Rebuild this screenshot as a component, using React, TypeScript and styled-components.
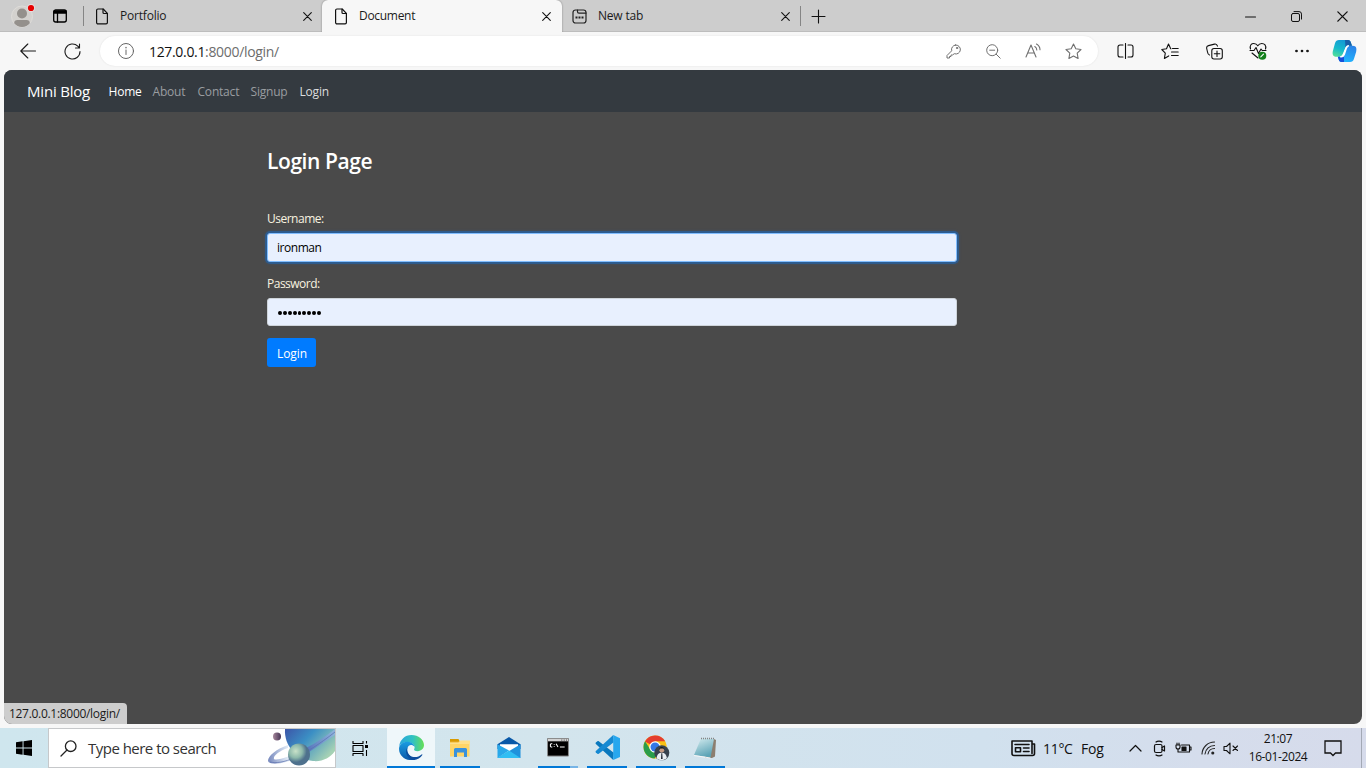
import React from "react";
import styled, { createGlobalStyle } from "styled-components";

const Global = createGlobalStyle`
  * { box-sizing: border-box; }
  html, body { margin: 0; padding: 0; overflow: hidden; }
  body {
    font-family: "Segoe UI", "Open Sans", "Noto Sans", sans-serif;
    font-size: 12px;
    color: #1b1b1b;
  }
  svg { display: block; flex: none; }
`;

const Screen = styled.div`
  width: 1366px;
  height: 768px;
  display: flex;
  flex-direction: column;
  background: #f7f7f7;
`;

const Text = styled.span<{ $ls?: number; $size?: number }>`
  white-space: nowrap;
  letter-spacing: ${(p) => p.$ls ?? 0}px;
  ${(p) => p.$size && `font-size: ${p.$size}px;`}
`;

/* ---------- tab strip ---------- */
const TabStrip = styled.div`
  height: 32px;
  flex: none;
  display: flex;
  align-items: stretch;
  background: #cdcdcd;
  box-shadow: inset 0 -1px 0 #bdbdbd;
`;
const StripStart = styled.div`
  width: 83px;
  display: flex;
  align-items: center;
  padding-left: 11px;
  gap: 17px;
`;
const Divider = styled.div`
  width: 1px;
  height: 20px;
  align-self: center;
  background: #858585;
`;
const Tab = styled.div<{ $w: number; $active?: boolean; $pad: number }>`
  width: ${(p) => p.$w}px;
  padding: 0 ${(p) => (p.$active ? 11 : 10)}px 0 ${(p) => p.$pad}px;
  display: flex;
  align-items: center;
  border-radius: ${(p) => (p.$active ? "6px 6px 0 0" : "0")};
  background: ${(p) => (p.$active ? "#f7f7f7" : "transparent")};
  box-shadow: ${(p) => (p.$active ? "0 0 2px rgba(0,0,0,.4)" : "none")};
  clip-path: inset(0 -3px 0 -3px);
`;
const TabTitle = styled(Text)`
  flex: 1;
  padding-left: 11px;
  line-height: 16px;
`;
const NewTabButton = styled.div`
  width: 35px;
  display: grid;
  place-items: center;
`;
const WindowButtons = styled.div`
  margin-left: auto;
  margin-right: 1px;
  display: flex;
`;
const WindowButton = styled.div`
  width: 46px;
  display: grid;
  place-items: center;
`;

/* ---------- toolbar ---------- */
const Toolbar = styled.div`
  height: 38px;
  flex: none;
  display: flex;
  align-items: center;
  background: #f7f7f7;
`;
const ToolCell = styled.div<{ $w: number; $pl?: number }>`
  width: ${(p) => p.$w}px;
  height: 38px;
  padding-left: ${(p) => p.$pl ?? 0}px;
  flex: none;
  display: grid;
  place-items: center;
`;
const AddressBar = styled.div`
  width: 998px;
  height: 30px;
  margin-left: 6px;
  padding: 0 5px 0 17px;
  display: flex;
  align-items: center;
  border-radius: 15px;
  background: #fff;
  box-shadow: 0 0 2px rgba(0, 0, 0, 0.1);
`;
const Url = styled(Text)`
  flex: 1;
  padding-left: 14px;
  font-size: 14px;
  color: #6d6d6d;
  b { font-weight: 400; color: #111; }
`;

/* ---------- web page ---------- */
const Viewport = styled.main`
  position: relative;
  width: 1358px;
  height: 654px;
  flex: none;
  margin: 0 4px 4px;
  border-radius: 8px;
  overflow: hidden;
  background: #4a4a4a;
  color: #fff;
`;
const Navbar = styled.nav`
  height: 42px;
  padding: 0 23px;
  display: flex;
  align-items: center;
  background: #343a40;
`;
const Brand = styled(Text)`
  width: 81.5px;
  font-size: 15px;
`;
const NavLink = styled(Text)<{ $w: number; $tone?: "muted" | "hover" }>`
  width: ${(p) => p.$w}px;
  font-size: 12px;
  color: ${(p) => (p.$tone === "muted" ? "#9a9da0" : p.$tone === "hover" ? "#dcddde" : "#fff")};
`;
const LoginForm = styled.div`
  width: 690px;
  margin-left: 263px;
  padding-top: 35px;
  display: flex;
  flex-direction: column;
  align-items: flex-start;
`;
const Heading = styled.h3`
  margin: 0 0 34px;
  font-size: 21px;
  line-height: 29px;
  font-weight: 600;
  letter-spacing: -0.42px;
`;
const FieldLabel = styled.label`
  height: 18px;
  line-height: 18px;
  margin-bottom: 5px;
  letter-spacing: -0.5px;
  color: #f8f3e0;
`;
const Field = styled.div<{ $focus?: boolean }>`
  width: 690px;
  height: ${(p) => (p.$focus ? 29 : 28)}px;
  margin-bottom: ${(p) => (p.$focus ? 13 : 12)}px;
  padding: 0 9px;
  display: flex;
  align-items: center;
  border: 1px solid ${(p) => (p.$focus ? "#80bdff" : "#ced4da")};
  border-radius: 3px;
  background: #e8f0fe;
  color: #000;
  box-shadow: ${(p) => (p.$focus ? "0 0 0 2px rgba(0,123,255,.3), 0 0 3px 2px rgba(0,123,255,.15)" : "none")};
`;
const Dots = styled.span`
  display: flex;
  gap: 1px;
  padding: 2px 0 0 1px;
`;
const Dot = styled.i`
  width: 3.9px;
  height: 4px;
  border-radius: 50%;
  background: #000;
`;
const Submit = styled.button`
  width: 49px;
  height: 29px;
  padding: 2px 0 0 1px;
  border: 0;
  border-radius: 3px;
  background: #007bff;
  color: #fff;
  font: 12px "Segoe UI", "Open Sans", sans-serif;
  letter-spacing: -0.1px;
`;
const StatusBubble = styled.div`
  position: absolute;
  left: 0;
  bottom: 0;
  width: 123px;
  height: 21px;
  padding-left: 5px;
  line-height: 21px;
  border-radius: 0 4px 0 0;
  background: #cdcdcd;
  color: #1b1b1b;
`;

/* ---------- taskbar ---------- */
const Taskbar = styled.footer`
  height: 40px;
  flex: none;
  display: flex;
  background: linear-gradient(90deg, #cfe6ee 0%, #d3e5ed 40%, #d1e1ee 72%, #d5ddec 88%, #d6dbeb 100%);
`;
const Start = styled.div`
  width: 48px;
  display: grid;
  place-items: center;
`;
const Search = styled.div`
  width: 288px;
  display: flex;
  align-items: center;
  padding-left: 11px;
  border: 1px solid #c6c8ca;
  background: #fff;
`;
const SearchHint = styled(Text)`
  width: 190px;
  flex: none;
  padding-left: 11px;
  font-size: 15px;
  color: #333;
`;
const Apps = styled.div`
  display: flex;
  gap: 1px;
  margin-left: 3px;
`;
const AppButton = styled.div<{ $active?: boolean; $open?: boolean; $stack?: boolean }>`
  width: 48px;
  height: 40px;
  display: grid;
  place-items: center;
  padding-bottom: 1px;
  background: ${(p) =>
    p.$active
      ? "linear-gradient(#0078d7,#0078d7) 0 100% / 48px 2px no-repeat, #eff7fa"
      : p.$stack
      ? "linear-gradient(90deg,#0078d7 32px,#76b4e6 32px) 4px 100% / 40px 2px no-repeat"
      : p.$open
      ? "linear-gradient(#0078d7,#0078d7) 4px 100% / 40px 2px no-repeat"
      : "transparent"};
`;
const Tray = styled.div`
  margin-left: auto;
  display: flex;
  align-items: center;
  color: #111;
`;
const Weather = styled(Text)<{ $w: number }>`
  width: ${(p) => p.$w}px;
  font-size: 14px;
`;
const Temperature = styled(Weather)`
  margin-left: 7px;
`;
const TrayCell = styled.div<{ $w: number }>`
  width: ${(p) => p.$w}px;
  display: grid;
  place-items: center;
`;
const Clock = styled.div`
  width: 80px;
  margin-left: -3px;
  display: flex;
  flex-direction: column;
  align-items: center;
  line-height: 18px;
`;
const ShowDesktop = styled.div`
  width: 5px;
  height: 40px;
  margin-left: 13px;
  border-left: 1px solid #a3a9b5;
`;

/* ---------- icons ---------- */
type IconProps = { w?: number; h?: number; vb?: string; c?: string; sw?: number; children: React.ReactNode };
const Icon = ({ w = 16, h = 16, vb, c = "#1b1b1b", sw = 1.1, children }: IconProps) => (
  <svg width={w} height={h} viewBox={vb ?? `0 0 ${w} ${h}`} fill="none" stroke={c} strokeWidth={sw} strokeLinecap="round" strokeLinejoin="round">
    {children}
  </svg>
);

const Profile = () => (
  <svg width="24" height="24" viewBox="0 0 24 24">
    <circle cx="11" cy="12.5" r="10.5" fill="#d3d1ce" stroke="#dedcd9" />
    <circle cx="11" cy="9.5" r="5" fill="#94908c" />
    <path d="M3.2 19.2c0-2 1.2-3.2 3.2-3.2h9.2c2 0 3.2 1.2 3.2 3.2-1.8 2.4-4.6 3.8-7.8 3.8s-6-1.4-7.8-3.8z" fill="#94908c" />
    <circle cx="20" cy="4" r="3.9" fill="#e6dede" />
    <circle cx="20" cy="4" r="3.1" fill="#e60000" />
  </svg>
);
const Workspaces = () => (
  <Icon sw={1.3} c="#000"><rect x="1.7" y="2" width="12.600" height="12" rx="2" /><path d="M2 3h12v2H2z" fill="#000" /><path d="M5.500 5v9" /></Icon>
);
const PageIcon = () => (
  <Icon w={14} h={17} sw={1.2} c="#111"><path d="M3 1h5.2L12.4 5.3V14.5a1.3 1.3 0 0 1-1.3 1.3H3A1.3 1.3 0 0 1 1.6 14.500V2.300A1.300 1.300 0 0 1 3 1z" /><path d="M8 1.200V4.500a1 1 0 0 0 1 1h3.300" /></Icon>
);
const NewTabIcon = () => (
  <Icon w={15} h={15} sw={1.2} c="#222"><rect x="1" y="1" width="13" height="13" rx="2.500" /><path d="M5.500 1.200v1.500a1.400 1.400 0 0 0 1.400 1.400H14" /><path d="M3.500 8.500h2M6.500 8.500h2M9.500 8.500h2" strokeWidth="2" strokeLinecap="butt" /></Icon>
);
const Close = ({ s = 9 }: { s?: number }) => (
  <Icon w={s} h={s} vb="0 0 9 9" c="#111"><path d="M.7.7l7.600 7.600M8.300.7L.7 8.300" /></Icon>
);

const Planets = () => (
  <svg width="68" height="38" viewBox="0 0 68 38">
    <defs>
      <linearGradient id="big" x1="0" y1="0" x2="1" y2=".6">
        <stop offset="0" stopColor="#3c55a8" /><stop offset=".45" stopColor="#3b8fc4" /><stop offset="1" stopColor="#a5d1b4" />
      </linearGradient>
      <radialGradient id="small" cx=".35" cy=".35"><stop offset="0" stopColor="#c9e2c9" /><stop offset=".6" stopColor="#8db9ab" /><stop offset="1" stopColor="#4e718d" /></radialGradient>
      <linearGradient id="tiny"><stop offset="0" stopColor="#a6879b" /><stop offset="1" stopColor="#453454" /></linearGradient>
      <linearGradient id="ring"><stop offset="0" stopColor="#7688bd" /><stop offset=".3" stopColor="#e3edf7" /><stop offset=".55" stopColor="#526fba" /><stop offset="1" stopColor="#8fb6dc" /></linearGradient>
    </defs>
    <path d="M18 0h50v22c-5 7-13 11-22 10C29 30 17 17 18 0z" fill="url(#big)" />
    <path d="M21 16C9 20 1 27 1 32c2 6 25 2 44-11L68 6V0C59 7 49 14 39 19 24 28 9 32 7 30c-1-3 5-8 14-11z" fill="url(#ring)" />
    <path d="M3 33C15 36 36 28 68 3" fill="none" stroke="#5b70ae" strokeWidth=".7" />
    <circle cx="32" cy="25.500" r="11" fill="url(#small)" />
    <circle cx="10" cy="7.500" r="4" fill="url(#tiny)" />
  </svg>
);

const EdgeLogo = () => (
  <svg width="25" height="25" viewBox="0 0 24 24">
    <defs>
      <linearGradient id="e1" x1="0" y1=".3" x2="1" y2=".3"><stop offset="0" stopColor="#2aa5dc" /><stop offset=".55" stopColor="#30c2c2" /><stop offset="1" stopColor="#67df54" /></linearGradient>
      <linearGradient id="e2" x1="0" y1="0" x2="0" y2="1"><stop offset="0" stopColor="#1b9de2" /><stop offset="1" stopColor="#0b58a8" /></linearGradient>
    </defs>
    <path d="M.2 11C.8 4.600 5.700 0 12 0c6.700 0 12 4.600 12 9.700 0 3.400-2.700 5.800-6 5.800-2.800 0-4.100-1-3.400-2.100C16.200 11 13.400 7.200 9 6.900 4.500 6.600 1.300 8.500.2 11z" fill="url(#e1)" />
    <path d="M.1 12.200C.6 8.800 4.200 6.200 8.600 6.400c3.400.2 6.200 2.400 6.400 5-1-1.400-2.500-2-3.700-1.900-3 .3-4.200 4-3 7.200 1 3 4 5.500 7.400 6.700C8.400 26-.8 21 .1 12.200z" fill="url(#e2)" />
    <path d="M9.800 10.200c-2.900 1.700-2.600 7 .7 9.500 3.200 2.400 8.300 1.700 11.200-1 .5-.4 1 .1.700.6-2 3.200-6 5.200-9.500 4.600C7.500 22.800 4 14.200 9.800 10.200z" fill="#0c4d9c" />
  </svg>
);
const FolderIcon = () => (
  <svg width="22" height="20" viewBox="0 0 22 20">
    <path d="M1 3h19.500v15.500H1z" fill="#ffd567" />
    <path d="M1 3V1h8.500l1 2z" fill="#d99a00" />
    <path d="M1 4.500h8.500l2-2h9.500V6H1z" fill="#ffe08a" />
    <path d="M1 3h9.500L9.500 4.300H1z" fill="#e0a418" />
    <path d="M5 19v-7.500A1.500 1.500 0 0 1 6.500 10h10a1.500 1.500 0 0 1 1.500 1.500V19h-3v-4.500H8V19z" fill="#3992dc" />
  </svg>
);
const MailIcon = () => (
  <svg width="24" height="23" viewBox="0 0 25 23">
    <path d="M.5 8L12.500.5 24.500 8v5H.5z" fill="#0858a8" /><path d="M3 8h19v7l-9.500 3L3 15z" fill="#fff" />
    <path d="M.5 8l12 6.500L.5 22.500z" fill="#28a8ea" /><path d="M24.500 8v14.500H.5z" fill="#1f92dc" /><path d="M.5 22.500h24L12.500 14.500z" fill="#30bef3" />
  </svg>
);
const TerminalIcon = () => (
  <svg width="22" height="19" viewBox="0 0 23 20">
    <path d="M.5.5h22v18.500H.5z" fill="#000" stroke="#8b8b8b" /><path d="M1 1h21v2.500H1z" fill="#d2d2d2" />
    <path d="M15 2.200h1M17.500 2.200h1M20 2.200h1" stroke="#333" />
    <path d="M5.500 6H4.200L3.500 6.800v2l.7.700h1.300M7.500 6.500v.8M7.500 8.500v.8M9.500 6l2 3.500M13.500 9.500h5" stroke="#fff" fill="none" strokeWidth="1.100" />
  </svg>
);
const CodeIcon = () => (
  <svg width="25" height="25" viewBox="0 0 24 24">
    <path d="M17.500 24L.8 8.700c-.4-.4-.4-1 0-1.400L2.300 6c.4-.3.9-.3 1.300 0L18 17z" fill="#0a78bd" />
    <path d="M17.500 0L.8 15.300c-.4.4-.4 1 0 1.400L2.300 18c.4.300.9.300 1.300 0L18 7z" fill="#1689d2" />
    <path d="M17.500 0v24L24 21V3z" fill="#27a7ee" />
  </svg>
);
const ChromeIcon = () => (
  <svg width="27" height="26" viewBox="0 0 28 27">
    <circle cx="12.500" cy="12.500" r="12" fill="#fbc116" />
    <path d="M12.500 12.500L2 6.700A12 12 0 0 1 23 6.500H12.500z" fill="#e43e2f" />
    <path d="M2.100 6.500A12 12 0 0 0 12 24.500l5.200-9.300-4.700-2.700-4.800 2.700z" fill="#2a9d4b" />
    <circle cx="12.500" cy="12.500" r="6" fill="#fff" /><circle cx="12.500" cy="12.500" r="4.700" fill="#3577e8" />
    <circle cx="19.500" cy="18.500" r="7.800" fill="#38424f" />
    <path d="M14 24.200c.7-4 2.300-5.700 5.500-5.700 3 0 4.800 1.700 5.300 5.500-2.800 2.800-7.500 3-10.800.2z" fill="#e9edf3" />
    <circle cx="19.500" cy="15.800" r="2.500" fill="#c79a83" /><path d="M16.800 15.500c-.1-4 5.200-4 5.400-.2l-1-1.300h-3.300z" fill="#15171c" />
    <path d="M19 19h1l.4 6h-1.700z" fill="#1c2330" />
  </svg>
);
const NotepadIcon = () => (
  <svg width="24" height="24" viewBox="0 0 24 24">
    <defs><linearGradient id="np" x1="0" y1="0" x2=".4" y2="1"><stop offset="0" stopColor="#d6edf0" /><stop offset="1" stopColor="#5da4b6" /></linearGradient></defs>
    <path d="M20 2.500l3 1.500-1 16.500-3 1.500H12z" fill="#8c7f70" />
    <path d="M8 2.500L21 3l-3.500 18.500L1 19z" fill="url(#np)" /><path d="M1 19l16.500 2.500-.2 1L.8 20z" fill="#f5f5f5" />
    <path d="M8 2.500h13" stroke="#858585" strokeWidth="1.500" strokeDasharray="1 1" />
  </svg>
);
const Copilot = () => (
  <svg width="25" height="24" viewBox="0 0 25 24">
    <defs>
      <linearGradient id="c1" x1=".6" y1="0" x2=".2" y2="1"><stop offset="0" stopColor="#1297d5" /><stop offset=".55" stopColor="#16b9cb" /><stop offset="1" stopColor="#54df97" /></linearGradient>
      <linearGradient id="c2" x1=".7" y1="0" x2=".3" y2="1"><stop offset="0" stopColor="#2a83e8" /><stop offset="1" stopColor="#20b8ff" /></linearGradient>
    </defs>
    <path d="M7 1h9c2 0 2.600 1.500 3.200 3.500l.8 2.200h-3.500c-2 0-2.700 1-3.300 3L11.400 15c-.7 2-1.600 2.800-3.400 2.800H4.500C.8 17.800 0 15 1 11.500L3 4.300C3.700 2 5 1 7 1z" fill="url(#c1)" />
    <path d="M18 23H9.500c-2 0-2.600-1.500-3.200-3.700l-.5-1.500H9c2 0 2.700-1 3.300-3l1.600-5.200c.7-2 1.500-2.900 3.300-2.900h3.600c3.500 0 4.200 2.800 3.300 6.200L22 19.700c-.7 2.300-2 3.300-4 3.300z" fill="url(#c2)" />
    <path d="M13 1h3c2 0 2.600 1.500 3.200 3.500l.8 2.200h-3.500c-1.500 0-2.500.5-3 2z" fill="#175fa8" />
    <path d="M12 23H9.500c-2 0-2.600-1.500-3.200-3.700l-.5-1.500H9c1.400 0 2.400-.7 3-2z" fill="#174fd9" />
    <path d="M14.200 8.200c.6-1 1.500-1.500 2.600-1.500-1.400.5-2 1.300-2.500 2.900l-1.900 5.900c-.6 1.600-1.500 2.300-3 2.300H8.200c1.700-.2 2.600-1.100 3.200-2.900z" fill="#fff" stroke="#fff" strokeWidth="1.200" />
  </svg>
);

export default function App() {
  return (
    <Screen>
      <Global />
      <TabStrip>
        <StripStart><Profile /><Workspaces /></StripStart>
        <Divider />
        <Tab $w={238} $pad={11}><PageIcon /><TabTitle $ls={-0.2}>Portfolio</TabTitle><Close /></Tab>
        <Tab $w={240} $pad={12} $active><PageIcon /><TabTitle $ls={-0.3}>Document</TabTitle><Close /></Tab>
        <Tab $w={238} $pad={10}><NewTabIcon /><TabTitle $ls={-0.2}>New tab</TabTitle><Close /></Tab>
        <Divider />
        <NewTabButton><Icon w={15} h={15} c="#111"><path d="M7.500 1v13M1 7.500h13" /></Icon></NewTabButton>
        <WindowButtons>
          <WindowButton><Icon w={11} h={11} c="#111"><path d="M.5 6h10" /></Icon></WindowButton>
          <WindowButton><Icon w={11} h={11} c="#111" sw={1}><rect x=".5" y="2.500" width="8" height="8" rx="1.500" /><path d="M3 .6h5a2.500 2.500 0 0 1 2.500 2.500v5" /></Icon></WindowButton>
          <WindowButton><Close s={11} /></WindowButton>
        </WindowButtons>
      </TabStrip>

      <Toolbar>
        <ToolCell $w={50} $pl={6}><Icon><path d="M15.500 8H.8M7.800 1L.8 8l7 7" /></Icon></ToolCell>
        <ToolCell $w={44}><Icon w={17} h={17}><path d="M16 8.500A7.500 7.500 0 1 1 13.800 3.200L15.500 5M15.500 1v4h-4" /></Icon></ToolCell>
        <AddressBar>
          <Icon w={18} h={18} c="#666" sw={1}><circle cx="9" cy="9" r="7.500" /><path d="M9 8v4.500" /><path d="M9 5.500v.2" strokeWidth="1.400" /></Icon>
          <Url $ls={-0.33}><b>127.0.0.1</b>:8000/login/</Url>
          <ToolCell $w={40}><Icon w={15} h={15} c="#707070" sw={1}><path d="M9.500 1a4.500 4.500 0 1 1-1.200 8.700L6.500 11H5v1.500H3.500V14H1v-2.500l4.700-4.700A4.500 4.500 0 0 1 9.500 1z" /><circle cx="11" cy="4" r=".7" /></Icon></ToolCell>
          <ToolCell $w={40}><Icon w={15} h={15} c="#707070" sw={1}><circle cx="6.200" cy="6.200" r="5.500" /><path d="M3.700 6.200h5M10.200 10.200l4 4" /></Icon></ToolCell>
          <ToolCell $w={40}><Icon w={17} h={16} c="#707070" sw={1.1}><path d="M1 14L6 2l5 12M2.800 10h6.500M9.800 3.500c1.300.8 2 2 2 3.500M11.500 1c2.300 1.300 3.500 3.300 3.500 5.800" /></Icon></ToolCell>
          <ToolCell $w={40}><Icon w={17} h={17} c="#707070" sw={1.1}><path d="M8.500 1l2.300 4.800 5.200.7-3.800 3.700.9 5.300-4.600-2.500-4.600 2.500.9-5.300L1 6.500l5.200-.7z" /></Icon></ToolCell>
        </AddressBar>
        <ToolCell $w={55}><Icon w={17} h={16} c="#111"><path d="M6 2H3a2 2 0 0 0-2 2v8a2 2 0 0 0 2 2h3M11 2h3a2 2 0 0 1 2 2v8a2 2 0 0 1-2 2h-3M8.500.5v15" /></Icon></ToolCell>
        <ToolCell $w={34}><Icon w={18} h={17} c="#111"><path d="M10 5.800h-.3L7.500 1 5.500 5.700.8 6.500l3.500 3.600-.9 5.300 4.300-2.500M11.500 5.500h5.700M10.500 9h6.700M10.500 12.500h6.700" /></Icon></ToolCell>
        <ToolCell $w={54}><Icon w={17} h={17} c="#111"><rect x="5.800" y="5.500" width="10.500" height="10.500" rx="2.200" /><path d="M11 8v5.500M8.300 10.700h5.500M3.500 12C2 11.500 1.700 10.500 1.500 9L.7 5.500C.4 4 1 3 2.500 2.600l6-1.500c1.500-.4 2.500.4 3 2" /></Icon></ToolCell>
        <ToolCell $w={34}><Icon w={18} h={18} c="#111"><path d="M1.500 7C.5 3 2.500 1.500 4.800 1.500c2 0 3.200 1 4 2.300.8-1.300 2-2.300 4-2.300C15.500 1.500 17.500 3.500 16.500 7M1 8.500h4l2-3 2.500 6L12 7l1.200 1.500h3.800M3 11l6 5" /><circle cx="13.300" cy="13.700" r="4" fill="#13801c" stroke="none" /><path d="M11.800 14.800l2.700-2.600" stroke="#fff" /></Icon></ToolCell>
        <ToolCell $w={54}><Icon w={16} h={4} c="#111"><circle cx="2.500" cy="2" r=".8" fill="#111" /><circle cx="8" cy="2" r=".8" fill="#111" /><circle cx="13.500" cy="2" r=".8" fill="#111" /></Icon></ToolCell>
        <ToolCell $w={31}><Copilot /></ToolCell>
      </Toolbar>

      <Viewport>
        <Navbar>
          <Brand $ls={-0.2}>Mini Blog</Brand>
          <NavLink $w={44} $ls={-0.2}>Home</NavLink>
          <NavLink $w={45} $ls={-0.2} $tone="muted">About</NavLink>
          <NavLink $w={53} $ls={-0.2} $tone="muted">Contact</NavLink>
          <NavLink $w={49} $ls={-0.2} $tone="muted">Signup</NavLink>
          <NavLink $w={40} $ls={-0.2} $tone="hover">Login</NavLink>
        </Navbar>
        <LoginForm>
          <Heading>Login Page</Heading>
          <FieldLabel>Username:</FieldLabel>
          <Field $focus><Text $ls={-0.45}>ironman</Text></Field>
          <FieldLabel>Password:</FieldLabel>
          <Field><Dots>{Array.from({ length: 9 }, (_, i) => <Dot key={i} />)}</Dots></Field>
          <Submit>Login</Submit>
        </LoginForm>
        <StatusBubble><Text $ls={-0.3}>127.0.0.1:8000/login/</Text></StatusBubble>
      </Viewport>

      <Taskbar>
        <Start><svg width="16" height="16" viewBox="0 0 16 16"><path d="M0 2.200L6.600 1.300v6.200H0zM7.500 1.200L16 0v7.500H7.500zM0 8.400h6.600v6.300L0 13.800zM7.500 8.400H16V16l-8.500-1.200z" fill="#000" /></svg></Start>
        <Search>
          <Icon w={17} h={17} c="#222" sw={1.3}><circle cx="10.700" cy="6.200" r="5.300" /><path d="M7 10L1 16" /></Icon>
          <SearchHint $ls={-0.52}>Type here to search</SearchHint>
          <Planets />
        </Search>
        <Start><Icon c="#000" sw={1.1} w={17} h={17}><path d="M1 1v2.500h10V1M1 16v-2.500h10V16M1 5.500h10v6H1zM14.500 1v2.500M14.500 10v6" strokeLinecap="butt" /><path d="M13 5h3v3h-3z" fill="#000" stroke="none" /></Icon></Start>
        <Apps>
          <AppButton $active><EdgeLogo /></AppButton>
          <AppButton $open><FolderIcon /></AppButton>
          <AppButton><MailIcon /></AppButton>
          <AppButton $stack><TerminalIcon /></AppButton>
          <AppButton $open><CodeIcon /></AppButton>
          <AppButton $open><ChromeIcon /></AppButton>
          <AppButton $open><NotepadIcon /></AppButton>
        </Apps>
        <Tray>
          <Icon w={25} h={17} c="#111" sw={1.6}><path d="M21 4h2.500v9.500a2 2 0 0 1-2 2H3a2 2 0 0 1-2-2V1h20v12.500" /><path d="M4 4.500h14M12.500 8H18M12.500 11.500H18" /><path d="M4.500 7.700h5v4h-5z" /></Icon>
          <Temperature $ls={-0.3} $w={38}>11°C</Temperature>
          <Weather $ls={-0.2} $w={42}>Fog</Weather>
          <TrayCell $w={24}><Icon w={13} h={8} c="#111" sw={1.2}><path d="M1 7l5.500-5.500L12 7" /></Icon></TrayCell>
          <TrayCell $w={24}><Icon w={13} h={17} c="#111" sw={1.2}><rect x="1.500" y="4.500" width="7.500" height="8" rx="1.500" /><path d="M9 7.500l2.500-1.500v5L9 9.500M3 2c1.500-1.200 4.500-1.200 6 0M3 15c1.500 1.200 4.500 1.200 6 0" /></Icon></TrayCell>
          <TrayCell $w={24}><Icon w={17} h={13} c="#111"><path d="M6.500 3h8v7h-9M14.500 5H16v3h-1.500M1 3h4v2a2 2 0 0 1-4 0zM2 3V1M4 3V1M3 7v3h2" /><path d="M7 5h4v3.500H7z" fill="#111" /></Icon></TrayCell>
          <TrayCell $w={26}><Icon w={15} h={14} c="#222" sw={1.1}><path d="M1 13A12.500 12.500 0 0 1 13.500 1M4 13a9.500 9.500 0 0 1 9.500-8.500M7 13a6.500 6.500 0 0 1 6.500-5.500" /><circle cx="11.800" cy="12" r="1" fill="#111" /></Icon></TrayCell>
          <TrayCell $w={20}><Icon w={16} h={13} c="#111"><path d="M1 4.500h2.500L7 1.200v10.600L3.500 8.500H1zM10 4l4.500 4.500M14.500 4L10 8.500" /></Icon></TrayCell>
          <Clock><Text $ls={-0.4}>21:07</Text><Text $ls={-0.4}>16-01-2024</Text></Clock>
          <TrayCell $w={30}><Icon w={18} h={18} c="#111" sw={1.3}><path d="M1 2h16v12h-5.500L9 16.500 6.500 14H1z" strokeLinejoin="miter" /></Icon></TrayCell>
          <ShowDesktop />
        </Tray>
      </Taskbar>
    </Screen>
  );
}
